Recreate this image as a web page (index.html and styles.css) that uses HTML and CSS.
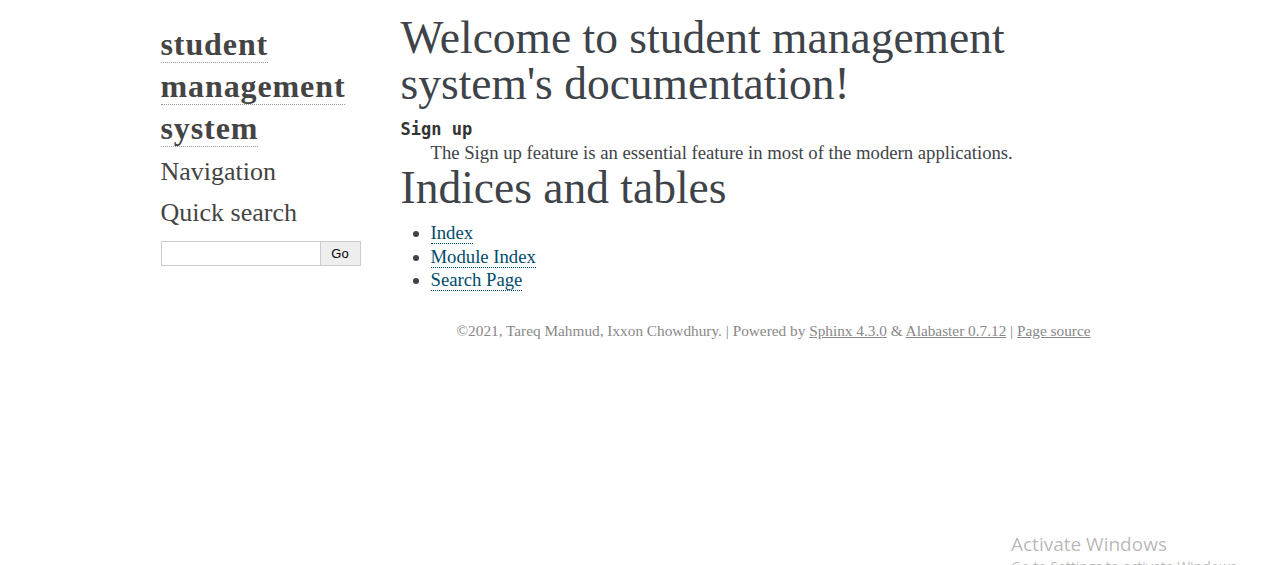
FILE: index.html
```html
<!DOCTYPE html>
<html lang="en">
<head>
<meta charset="utf-8">
<title>Welcome to student management system's documentation!</title>
<link rel="stylesheet" href="styles.css">
</head>
<body>
<div class="document">
  <div class="sidebar">
    <h1 class="logo"><a href="#">student management system</a></h1>
    <h3 class="side-title first">Navigation</h3>
    <h3 class="side-title">Quick search</h3>
    <form class="search">
      <input type="text" class="search-input" aria-label="search">
      <button type="button" class="search-btn">Go</button>
    </form>
  </div>
  <div class="body">
    <h1 class="title">Welcome to student management system's documentation!</h1>
    <dl class="def">
      <dt><code>Sign up</code></dt>
      <dd>The Sign up feature is an essential feature in most of the modern applications.</dd>
    </dl>
    <h1 class="title">Indices and tables</h1>
    <ul class="links">
      <li><a href="#">Index</a></li>
      <li><a href="#">Module Index</a></li>
      <li><a href="#">Search Page</a></li>
    </ul>
  </div>
</div>
<div class="footer">
  ©2021, Tareq Mahmud, Ixxon Chowdhury. | Powered by <a href="#">Sphinx 4.3.0</a> &amp; <a href="#">Alabaster 0.7.12</a> | <a href="#">Page source</a>
</div>
<div class="activate">
  <div class="act-title">Activate Windows</div>
  <div class="act-sub">Go to Settings to activate Windows.</div>
</div>
</body>
</html>
```
FILE: styles.css
```css
html, body {
  margin: 0;
  padding: 0;
  background: #fff;
}
body {
  font-family: Georgia, "Liberation Serif", serif;
  font-size: 18.7px;
  color: #3E4349;
  overflow: hidden;
  height: 565px;
  position: relative;
}
.document {
  width: 940px;
  margin: 0 auto;
  display: flex;
}
.sidebar {
  width: 240px;
  flex: none;
  padding-top: 23px;
}
.logo {
  margin: 0;
  font-size: 32px;
  line-height: 42px;
  font-weight: bold;
  letter-spacing: 0.9px;
}
.logo a {
  color: #444;
  text-decoration: none;
  border-bottom: 1px dotted #999;
}
.side-title {
  margin: 0;
  font-size: 26px;
  font-weight: normal;
  line-height: 41px;
  color: #444;
}
.side-title.first {
  margin-top: 2px;
}
.search {
  display: flex;
  margin-top: 8px;
}
.search-input {
  box-sizing: border-box;
  width: 160px;
  height: 25px;
  margin: 0;
  border: 1px solid #ccc;
  padding: 2px;
  font-size: 14px;
}
.search-btn {
  box-sizing: border-box;
  width: 40px;
  height: 25px;
  margin: 0;
  border: 1px solid #ccc;
  border-left: none;
  background: #eee;
  font-family: "Liberation Sans", Arial, sans-serif;
  font-size: 13px;
  color: #000;
  padding: 0;
}
.body {
  flex: 1;
  padding-top: 15px;
}
.title {
  margin: 0;
  font-size: 45.5px;
  font-weight: normal;
  line-height: 46px;
  color: #3E4349;
}
.def {
  margin: 10px 0 0 0;
  line-height: 24px;
}
.def dt code {
  font-family: "DejaVu Sans Mono", "Liberation Mono", monospace;
  font-weight: bold;
  font-size: 17px;
  color: #333;
}
.def dd {
  margin: 0 0 0 30px;
}
.links {
  margin: 10px 0 0 0;
  padding-left: 30px;
  line-height: 23.5px;
}
.links a {
  color: #004B6B;
  text-decoration: none;
  border-bottom: 1px dotted #004B6B;
}
.footer {
  width: 940px;
  margin: 29px auto 0 auto;
  box-sizing: border-box;
  padding-right: 10px;
  text-align: right;
  font-size: 15.3px;
  line-height: 20px;
  color: #888;
}
.footer a {
  color: #888;
  text-decoration: underline;
}
.activate {
  position: absolute;
  left: 1011px;
  top: 531px;
  font-family: "Open Sans", "Noto Sans", sans-serif;
  color: rgba(0,0,0,0.3);
  white-space: nowrap;
}
.act-title {
  font-size: 19px;
  line-height: 26px;
}
.act-sub {
  font-size: 14px;
  line-height: 20px;
}
```
